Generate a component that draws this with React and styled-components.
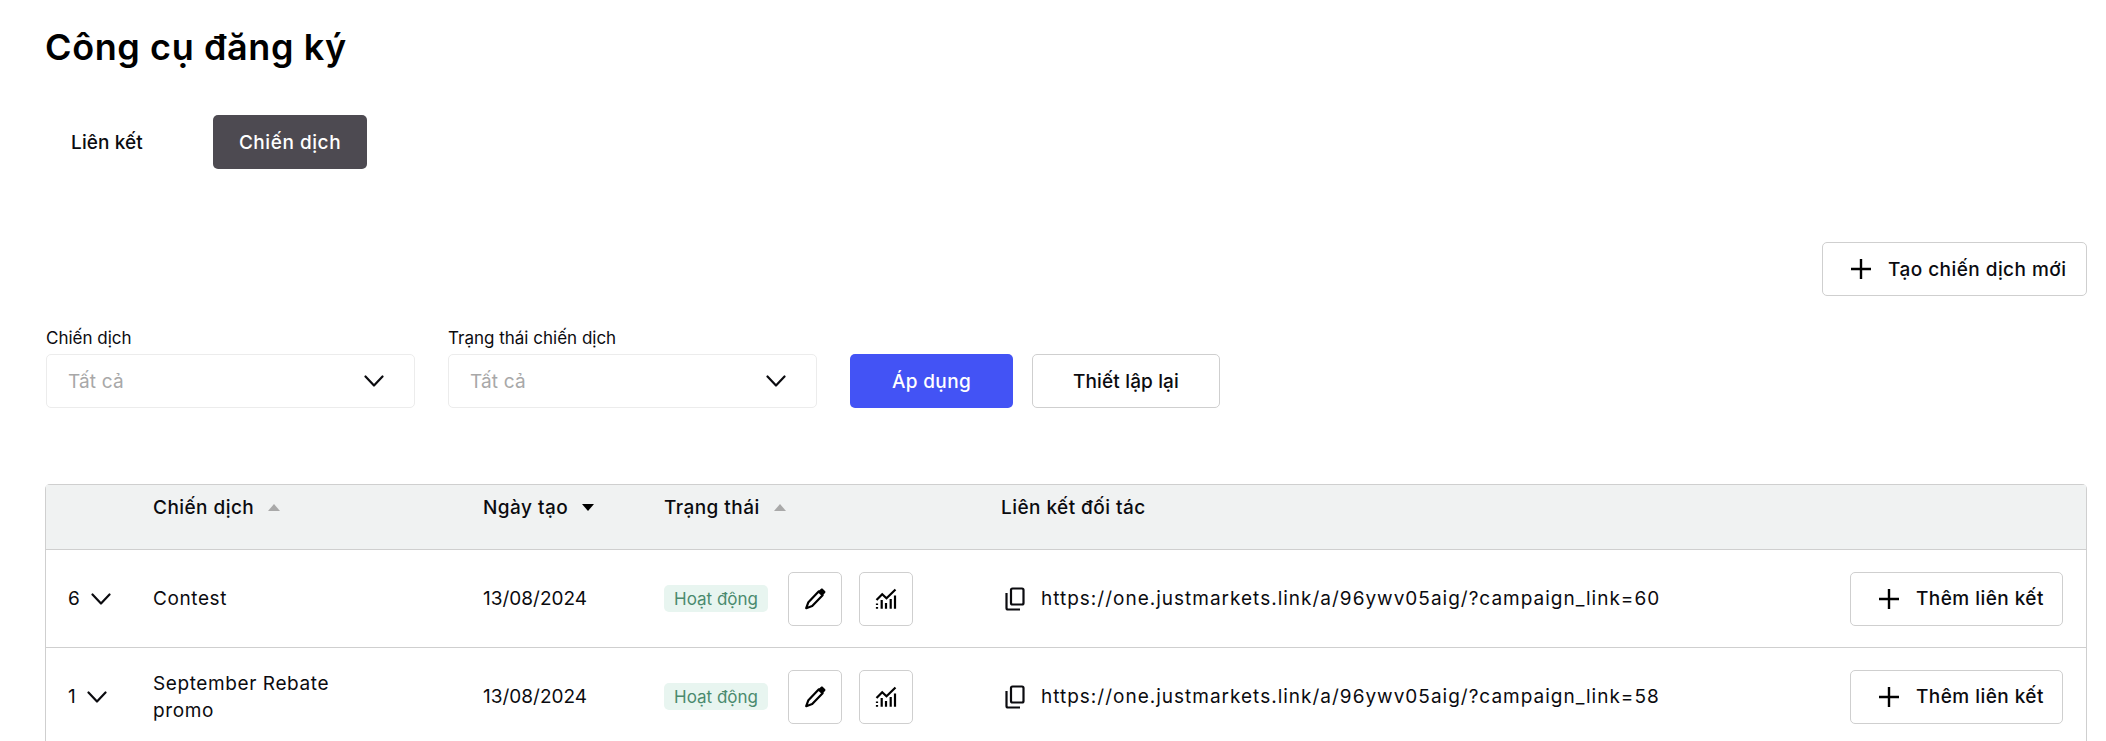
import React from "react";
import styled, { createGlobalStyle } from "styled-components";

const Global = createGlobalStyle`
  html, body { margin: 0; padding: 0; height: 741px; overflow: hidden; background: #fff; }
  body { font-family: Inter, "Noto Sans", sans-serif; color: #0b0b0f; }
  * { box-sizing: border-box; }
`;

const Page = styled.div`
  padding: 24px 19px 0 45px;
  width: 2106px;
`;
const Title = styled.h1`
  margin: 0;
  font-size: 36px;
  line-height: 46px;
  font-weight: 600;
  letter-spacing: 0.6px;
  color: #000;
`;
const Tabs = styled.div`
  display: flex;
  margin-top: 45px;
  gap: 44px;
`;
const Tab = styled.button`
  height: 54px;
  width: ${(p) => p.$w}px;
  padding: 0;
  border: 0;
  border-radius: 5px;
  background: ${(p) => (p.$active ? "#4d4a51" : "transparent")};
  color: ${(p) => (p.$active ? "#fff" : "#0b0b0f")};
  font: 450 19px Inter, sans-serif;
  letter-spacing: ${(p) => p.$ls}px;
`;
const CreateRow = styled.div`
  display: flex;
  justify-content: flex-end;
  margin-top: 73px;
`;
const OutlineButton = styled.button`
  display: inline-flex;
  align-items: center;
  justify-content: center;
  height: 54px;
  width: ${(p) => p.$w}px;
  padding: 0;
  background: #fff;
  border: 1.5px solid #cfcfcf;
  border-radius: 5px;
  color: #0b0b0f;
  font: 450 19px Inter, sans-serif;
  letter-spacing: 0.15px;
  flex: none;
`;
const AddButton = styled(OutlineButton)`
  justify-content: flex-start;
  padding-left: 28px;
  gap: ${(p) => p.$gap}px;
  letter-spacing: 0.45px;
`;
const Filters = styled.div`
  display: flex;
  align-items: flex-end;
  margin: 32px 0 0 1px;
`;
const Field = styled.div`
  width: 369px;
  margin-right: 33px;
`;
const Label = styled.div`
  font-size: 17px;
  line-height: 20px;
  margin-bottom: 6px;
  font-weight: 400;
  color: #0b0b0f;
`;
const Select = styled.div`
  height: 54px;
  border: 1px solid #ececec;
  border-radius: 5px;
  display: flex;
  align-items: center;
  justify-content: space-between;
  padding: 0 30px 0 21px;
  font-size: 19px;
  letter-spacing: 0.15px;
  color: #a8a8a8;
`;
const ApplyButton = styled.button`
  width: 163px;
  height: 54px;
  border: 0;
  border-radius: 5px;
  background: #4353f5;
  color: #fff;
  font: 450 19px Inter, sans-serif;
  letter-spacing: 0.35px;
  margin-right: 19px;
`;
const Table = styled.div`
  margin-top: 76px;
  border: 1.5px solid #cfcfcf;
  border-bottom: 0;
  border-radius: 5px 5px 0 0;
  width: 2042px;
`;
const columns = "107px 330px 181px 337px 1fr";
const Header = styled.div`
  display: grid;
  grid-template-columns: ${columns};
  height: 65px;
  background: #f0f2f2;
  padding-top: 11px;
  border-bottom: 1.5px solid #cfcfcf;
  font-size: 19px;
  font-weight: 450;
  letter-spacing: 0.45px;
`;
const HeadCell = styled.div`
  display: flex;
  align-items: flex-start;
  gap: 14px;
  line-height: 24px;
`;
const SortMark = styled.span`
  width: 0;
  height: 0;
  margin-top: 8px;
  border-left: 6px solid transparent;
  border-right: 6px solid transparent;
  ${(p) =>
    p.$down
      ? "border-top: 7px solid #000;"
      : "border-bottom: 7px solid #a9a9a9;"}
`;
const Row = styled.div`
  display: grid;
  grid-template-columns: ${columns};
  align-items: center;
  height: 98px;
  border-bottom: 1.5px solid #cfcfcf;
  font-size: 19px;
  font-weight: 400;
`;
const CountCell = styled.div`
  display: flex;
  align-items: center;
  gap: 11px;
  padding-left: 22px;
`;
const Name = styled.div`
  line-height: 27px;
  width: 200px;
  letter-spacing: 0.6px;
`;
const StatusCell = styled.div`
  display: flex;
  align-items: center;
`;
const Badge = styled.span`
  width: 104px;
  height: 27px;
  border-radius: 5px;
  background: #e8f5f0;
  color: #4a8a6e;
  font-size: 17px;
  display: flex;
  align-items: center;
  justify-content: center;
`;
const IconButton = styled.button`
  width: 54px;
  height: 54px;
  padding: 0;
  background: #fff;
  border: 1.5px solid #cfcfcf;
  border-radius: 5px;
  display: flex;
  align-items: center;
  justify-content: center;
  margin-left: ${(p) => p.$ml}px;
`;
const LinkCell = styled.div`
  display: flex;
  align-items: center;
  padding: 0 23px 0 4px;
`;
const Url = styled.span`
  margin-left: 16px;
  flex: 1;
  font-weight: 400;
  letter-spacing: 1px;
`;

const Chevron = ({ size = 20 }) => (
  <svg width={size} height={size * 0.6} viewBox="0 0 20 12" fill="none" stroke="#0b0b0f" strokeWidth="2.2" strokeLinecap="round" strokeLinejoin="round">
    <path d="M1.5 1.5 10 10.5 18.5 1.5" />
  </svg>
);
const Plus = () => (
  <svg width="20" height="20" viewBox="0 0 20 20" stroke="#000" strokeWidth="2.4" style={{ flex: "none" }}>
    <path d="M0 10h20M10 0v20" />
  </svg>
);
const Pencil = () => (
  <svg width="22" height="22" viewBox="0 0 22 22" fill="none">
    <path d="M4.4 14.200 14.600 3.400l4 3.800L8.200 18l-6 2.200z" stroke="#000" strokeWidth="2.200" strokeLinejoin="round" />
    <path d="M14 3.600 16.800.9c.7-.6 1.500-.6 2.100 0l2.100 2.100c.6.600.6 1.400 0 2L18.400 7.800z" fill="#000" />
  </svg>
);
const ChartIcon = () => (
  <svg width="22" height="22" viewBox="0 0 22 22" fill="none" stroke="#000">
    <path d="M1.500 12 7.200 6.200l4.300 4L20.500 1.500" strokeWidth="2.200" />
    <path d="M2 15.500v1.500M2 19v1.800M6.700 12v8.800M11 15v5.800M15.700 11v9.800M20 7.500v13.300" strokeWidth="2.200" />
  </svg>
);
const CopyIcon = () => (
  <svg width="20" height="24" viewBox="0 0 20 24" fill="none" stroke="#0b0b0f" strokeWidth="2.200">
    <rect x="6" y="1.500" width="12.500" height="16" rx="1.500" />
    <path d="M1.500 6v15c0 .8.700 1.500 1.500 1.500h12" />
  </svg>
);

const rows = [
  { count: "6", name: "Contest", link: "60" },
  { count: "1", name: "September Rebate promo", link: "58" },
];

export default function App() {
  return (
    <Page>
      <Global />
      <Title>Công cụ đăng ký</Title>
      <Tabs>
        <Tab $w={124} $ls={0.1}>Liên kết</Tab>
        <Tab $w={154} $ls={0.55} $active>Chiến dịch</Tab>
      </Tabs>
      <CreateRow>
        <AddButton $w={265} $gap={17}>
          <Plus />
          Tạo chiến dịch mới
        </AddButton>
      </CreateRow>
      <Filters>
        <Field>
          <Label>Chiến dịch</Label>
          <Select>
            Tất cả
            <Chevron />
          </Select>
        </Field>
        <Field>
          <Label>Trạng thái chiến dịch</Label>
          <Select>
            Tất cả
            <Chevron />
          </Select>
        </Field>
        <ApplyButton>Áp dụng</ApplyButton>
        <OutlineButton $w={188}>Thiết lập lại</OutlineButton>
      </Filters>
      <Table>
        <Header>
          <div />
          <HeadCell>
            Chiến dịch
            <SortMark />
          </HeadCell>
          <HeadCell>
            Ngày tạo
            <SortMark $down />
          </HeadCell>
          <HeadCell>
            Trạng thái
            <SortMark />
          </HeadCell>
          <HeadCell>Liên kết đối tác</HeadCell>
        </Header>
        {rows.map((r) => (
          <Row key={r.count}>
            <CountCell>
              {r.count}
              <Chevron />
            </CountCell>
            <Name>{r.name}</Name>
            <div>13/08/2024</div>
            <StatusCell>
              <Badge>Hoạt động</Badge>
              <IconButton $ml={20} aria-label="Sửa">
                <Pencil />
              </IconButton>
              <IconButton $ml={17} aria-label="Thống kê">
                <ChartIcon />
              </IconButton>
            </StatusCell>
            <LinkCell>
              <CopyIcon />
              <Url>https://one.justmarkets.link/a/96ywv05aig/?campaign_link={r.link}</Url>
              <AddButton $w={213} $gap={17}>
                <Plus />
                Thêm liên kết
              </AddButton>
            </LinkCell>
          </Row>
        ))}
      </Table>
    </Page>
  );
}
